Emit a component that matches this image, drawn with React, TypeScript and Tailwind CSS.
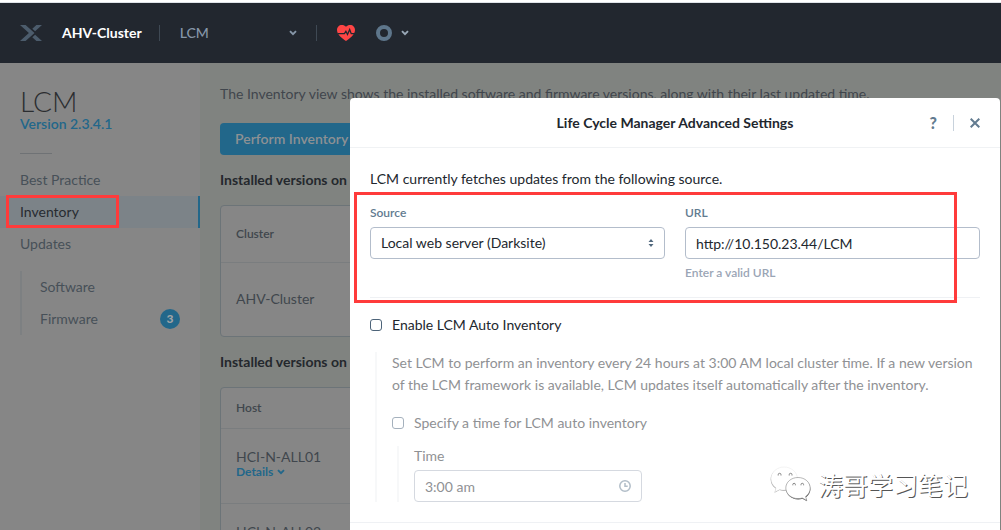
import { ReactNode } from "react";

function Chevron({ className }: { className: string }) {
  return (
    <svg viewBox="0 0 8 6" className={className} fill="none" stroke="currentColor" strokeWidth="1.9" aria-hidden="true">
      <path d="M1 1.2 4 4.2 7 1.2" />
    </svg>
  );
}

function TopBar() {
  return (
    <header className="border-t-2 border-white bg-[#22272f]">
      <div className="flex h-[61px] items-center border-t border-[#dfe3e8] px-5">
        <svg viewBox="0 0 22 16" className="h-4 w-[22px]" fill="#4c5c6c" aria-label="Nutanix">
          <path d="M0 0h5.6L14.5 8 5.6 16H0L8.9 8z" />
          <path d="M16.4 0H22l-6.900 6.200-2.800-2.500zM12.300 12.300l2.800-2.500L22 16h-5.600z" />
        </svg>
        <a href="#cluster" className="ml-5 text-sm font-bold text-white">AHV-Cluster</a>
        <span className="ml-[17px] h-4 w-px bg-[#3f4954]" />
        <button className="ml-5 flex w-[117px] items-center justify-between text-sm font-medium text-[#8696a8]">
          LCM
          <Chevron className="h-1.5 w-2" />
        </button>
        <span className="ml-[19px] h-4 w-px bg-[#3f4954]" />
        <button aria-label="Health" className="ml-5">
          <svg viewBox="0 0 18 16" className="h-4 w-[18px]">
            <path fill="#ff4545" d="M9 1.8C7.800 .5 6.500 0 4.900 0 2 0 0 2.100 0 5c0 4.700 5 8.400 9 11 4-2.600 9-6.300 9-11 0-2.900-2-5-4.900-5C11.500 0 10.200.5 9 1.800z" />
            <path fill="none" stroke="#22272f" strokeWidth="1.300" d="M1 8.600h6.400l1.500-2.300 1.600 3.200 2.200-5 1.500 4.100H18" />
          </svg>
        </button>
        <button aria-label="Tasks" className="ml-5 flex items-center gap-2 text-[#9aa9b8]">
          <svg viewBox="0 0 18 18" className="size-[18px]">
            <circle cx="9" cy="9" r="6" fill="none" stroke="#5e768b" strokeWidth="4" />
          </svg>
          <Chevron className="h-1.5 w-2" />
        </button>
      </div>
    </header>
  );
}

function NavItem({ active, children }: { active?: boolean; children: ReactNode }) {
  return (
    <a
      href="#nav"
      className={
        active
          ? "relative flex h-8 items-center border-r-2 border-[#22678a] bg-[#7c8388] px-5 text-[#272b31]"
          : "flex h-8 items-center px-5 text-[#475058]"
      }
    >
      {children}
      {active && <span className="absolute -top-px left-1.5 h-[33px] w-[113px] border-3 border-[#ff3b3b]" />}
    </a>
  );
}

function Sidebar() {
  return (
    <aside className="w-[200px] shrink-0 bg-[#868686] text-sm">
      <div className="px-5 pt-6">
        <h1 className="text-[28px] leading-7 font-light text-[#2b2d30]">LCM</h1>
        <a href="#version" className="block text-sm leading-[18px] font-semibold text-[#22678a]">Version 2.3.4.1</a>
        <div className="mt-5 h-px w-8 bg-[#6f7275]" />
      </div>
      <nav className="pt-2.5">
        <NavItem>Best Practice</NavItem>
        <NavItem active>Inventory</NavItem>
        <NavItem>Updates</NavItem>
        <div className="mt-[11px] ml-5 border-l-2 border-[#7d8082] pr-5">
          <a href="#software" className="flex h-8 items-center pl-[18px] text-[#475058]">Software</a>
          <a href="#firmware" className="flex h-8 items-center justify-between pl-[18px] text-[#475058]">
            Firmware
            <span className="flex size-5 items-center justify-center rounded-full bg-[#22678a] text-xs font-black text-[#a0a4a6]">3</span>
          </a>
        </div>
      </nav>
    </aside>
  );
}

function Inventory() {
  return (
    <main className="min-w-0 flex-1 bg-[#808380] px-5 pt-5 text-sm text-[#40464d]">
      <p className="leading-[22px]">
        The Inventory view shows the installed software and firmware versions, along with their last updated time.
      </p>
      <button className="mt-[18px] h-8 rounded bg-[#22678a] px-[15px] font-semibold text-[#8d9194]">Perform Inventory</button>
      <h2 className="mt-[15px] leading-5 font-bold text-[#24282d]">Installed versions on Cluster</h2>
      <div className="mt-[15px] rounded border border-[#6c7478] bg-[#868686]">
        <table className="w-full text-left">
          <thead>
            <tr className="h-14 border-b border-[#7a7d7f]">
              <th className="px-[15px] text-xs font-semibold">Cluster</th>
            </tr>
          </thead>
          <tbody>
            <tr className="h-[74px]">
              <td className="px-[15px]">AHV-Cluster</td>
            </tr>
          </tbody>
        </table>
      </div>
      <h2 className="mt-[15px] leading-5 font-bold text-[#24282d]">Installed versions on Hosts</h2>
      <div className="mt-[15px] rounded border border-[#6c7478] bg-[#868686]">
        <table className="w-full text-left">
          <thead>
            <tr className="h-10 border-b border-[#7a7d7f]">
              <th className="px-[15px] text-xs font-semibold">Host</th>
            </tr>
          </thead>
          <tbody>
            {["HCI-N-ALL01", "HCI-N-ALL02"].map((host) => (
              <tr key={host} className="h-[75px] border-b border-[#7a7d7f]">
                <td className="px-[15px] pt-5 align-top leading-4">
                  {host}
                  <button className="flex items-center gap-1 text-xs leading-[14px] font-bold text-[#22678a]">
                    Details
                    <Chevron className="h-1.5 w-2" />
                  </button>
                </td>
              </tr>
            ))}
          </tbody>
        </table>
      </div>
    </main>
  );
}

const backBubble =
  "M14 1C6.800 1 1 6.200 1 12.700c0 3.800 1.900 7 5.100 9.200L4.800 26l5-2.600c1.400.4 2.800.6 4.200.6 7.200 0 13.500-4.800 13.500-11.300S21.200 1 14 1z";
const frontBubble =
  "M28 11.500c-6.900 0-12.200 4.700-12.200 10.500S21.100 32.600 28 32.600c1.500 0 3-.2 4.300-.6l4.500 2.500-1.200-3.900c2.900-2 4.600-5 4.600-8.500 0-5.900-5.300-10.600-12.200-10.600z";

function Watermark() {
  return (
    <div className="absolute right-8 bottom-7 flex items-center gap-1.5">
      <svg viewBox="0 0 42 36" className="h-9 w-[42px]" aria-hidden="true">
        <path d={backBubble} fill="#999" transform="translate(-.3 .7)" />
        <path d={backBubble} fill="#fff" stroke="#e4e4e4" strokeWidth=".4" />
        <path d={frontBubble} fill="#555" transform="translate(.2 .8)" />
        <path d={frontBubble} fill="#fff" stroke="#888" strokeWidth=".6" />
        <path
          fill="none"
          stroke="#777"
          strokeWidth=".9"
          d="M8.200 9.500v-.8a1.400 1.400 0 0 1 2.800 0v.8M19.200 9.500v-.8a1.400 1.400 0 0 1 2.800 0v.8M22.800 19.300v-.7a1.300 1.300 0 0 1 2.600 0v.7M31 19.300v-.7a1.300 1.300 0 0 1 2.600 0v.7"
        />
      </svg>
      <span className="font-['Noto_Sans_CJK_SC',sans-serif] text-[25px] leading-8 text-white [text-shadow:1px_1px_0_#555]">
        涛哥学习笔记
      </span>
    </div>
  );
}

const box = "size-3 shrink-0 appearance-none rounded-[3px] border bg-white";
const field = "h-8 w-full rounded border bg-white px-2.5 text-sm";

function SettingsDialog() {
  return (
    <section
      role="dialog"
      aria-labelledby="dialog-title"
      className="absolute top-[98px] right-px bottom-0 left-[350px] overflow-hidden rounded-t bg-white text-sm text-[#22272e]"
    >
      <header className="grid h-[50px] grid-cols-[1fr_auto_1fr] items-center border-b border-[#f0f2f4] px-5">
        <h2 id="dialog-title" className="col-start-2 font-bold">Life Cycle Manager Advanced Settings</h2>
        <div className="flex items-center justify-end text-[#627b90]">
          <button aria-label="Help" className="text-base font-black">?</button>
          <span className="mx-4 h-4 w-px bg-[#c8d2dc]" />
          <button aria-label="Close">
            <svg viewBox="0 0 10 10" className="size-2.5" stroke="currentColor" strokeWidth="2">
              <path d="M.7.7l8.600 8.600M9.300.7.7 9.300" />
            </svg>
          </button>
        </div>
      </header>
      <div className="px-5 pt-5">
        <p className="leading-[22px]">LCM currently fetches updates from the following source.</p>
        <div className="relative grid h-[108px] grid-cols-2 gap-5 border-b border-[#eff1f4] pt-3.5">
          <div>
            <label htmlFor="source" className="block text-xs leading-[18px] font-semibold text-[#627b90]">Source</label>
            <div className="relative mt-[5px]">
              <select id="source" className={`${field} appearance-none border-[#b3bdcb]`}>
                <option>Local web server (Darksite)</option>
              </select>
              <svg viewBox="0 0 6 8" className="pointer-events-none absolute top-3 right-[11px] h-2 w-1.5" fill="#52697e" aria-hidden="true">
                <path d="M3 0l2.500 3H.5zM3 8 .5 5h5z" />
              </svg>
            </div>
          </div>
          <div>
            <label htmlFor="url" className="block text-xs leading-[18px] font-semibold text-[#627b90]">URL</label>
            <input id="url" type="text" defaultValue="http://10.150.23.44/LCM" className={`${field} mt-[5px] border-[#b3bdcb]`} />
            <p className="mt-[5px] text-xs leading-[18px] font-semibold text-[#9aa5b5]">Enter a valid URL</p>
          </div>
          <span className="pointer-events-none absolute top-0.5 right-[23px] -bottom-1.5 -left-4 border-3 border-[#ff3b3b]" />
        </div>
        <label className="mt-4 flex items-center gap-2.5 leading-[22px]">
          <input type="checkbox" className={`${box} border-[#4d6479]`} />
          Enable LCM Auto Inventory
        </label>
        <div className="mt-4 ml-[5px] border-l-2 border-[#f7f8f9] pl-[15px] text-[#8f9194]">
          <p className="leading-[22px]">
            Set LCM to perform an inventory every 24 hours at 3:00 AM local cluster time. If a new version
            of the LCM framework is available, LCM updates itself automatically after the inventory.
          </p>
          <label className="mt-4 flex items-center gap-2.5 leading-[22px]">
            <input type="checkbox" className={`${box} border-[#a5b1bd]`} />
            Specify a time for LCM auto inventory
          </label>
          <div className="mt-3 ml-[5px] border-l-2 border-[#f7f8f9] pl-[15px]">
            <label htmlFor="time" className="block leading-5">Time</label>
            <div className="relative mt-1 w-[228px]">
              <input id="time" type="text" defaultValue="3:00 am" className={`${field} border-[#d5d9e0]`} />
              <svg viewBox="0 0 12 12" className="absolute top-2.5 right-[11px] size-3" fill="none" stroke="#b1bdc8" strokeWidth="1.500" aria-hidden="true">
                <circle cx="6" cy="6" r="5.200" />
                <path d="M6 3v3.300h2.700" />
              </svg>
            </div>
          </div>
        </div>
      </div>
      <footer className="mt-5 h-16 border-t border-[#eff1f4]" />
      <Watermark />
    </section>
  );
}

export default function App() {
  return (
    <div className="relative flex h-screen flex-col overflow-hidden font-['Lato','Liberation_Sans',sans-serif]">
      <TopBar />
      <div className="flex min-h-0 flex-1">
        <Sidebar />
        <Inventory />
      </div>
      <SettingsDialog />
    </div>
  );
}
